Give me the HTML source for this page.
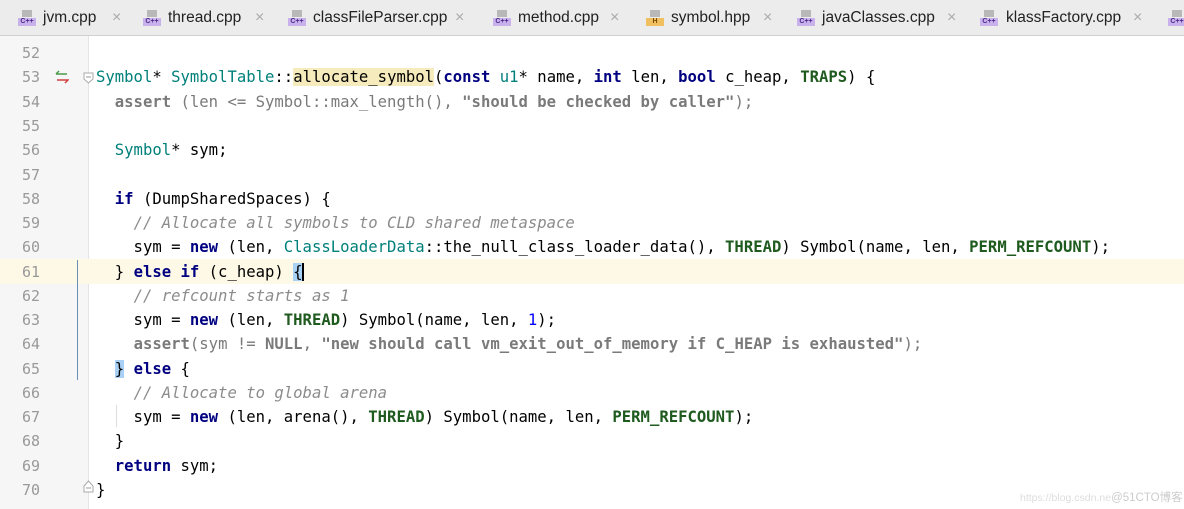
<!DOCTYPE html>
<html><head><meta charset="utf-8"><style>
body{margin:0;width:1184px;height:509px;overflow:hidden;background:#fff;position:relative;font-family:"Liberation Sans",sans-serif}
.tabs{position:absolute;left:0;top:0;width:1184px;height:35px;background:#ececec;border-bottom:1px solid #d0d0d0}
.tab{position:absolute;top:0;height:35px;line-height:35px;font-size:15.5px;color:#222;white-space:nowrap}
.ic{position:absolute;top:10px;width:18px;height:16px}
.ic .f{position:absolute;left:4px;top:0;width:10px;height:7px;background:#b8b8b8}
.ic .l{position:absolute;left:0;bottom:0;width:18px;height:8px;background:#c9b1ec;color:#4b2a8a;font-size:7px;line-height:8px;text-align:center;font-weight:bold}
.x{position:absolute;top:0;color:#aaa;font-size:16px}
.gut{position:absolute;left:0;top:36px;width:88px;height:473px;background:#f6f6f6;border-right:1px solid #e4e4e4}
.row{position:absolute;left:0;width:1184px;height:24px;line-height:24px;font-family:"DejaVu Sans Mono","Liberation Mono",monospace;font-size:15.6px;white-space:pre;color:#000}
.n{position:absolute;left:22px;color:#999;font-size:15px}
.c{position:absolute;left:96px}
.k{color:#000080;font-weight:bold}
.t{color:#00807a}
.g{color:#1f5a1f;font-weight:bold}
.d{color:#7a7a7a}
.cm{color:#8c8c8c;font-style:italic}
.num{color:#0000ff}
.hl{background:#f6ebbc}
</style></head><body>
<div class="tabs">
<div class="tab" style="left:18px"><div class="ic"><div class="f"></div><div class="l">C++</div></div><span style="position:absolute;left:25px">jvm.cpp</span><span class="x" style="left:94px">×</span></div>
<div class="tab" style="left:143px"><div class="ic"><div class="f"></div><div class="l">C++</div></div><span style="position:absolute;left:25px">thread.cpp</span><span class="x" style="left:112px">×</span></div>
<div class="tab" style="left:288px"><div class="ic"><div class="f"></div><div class="l">C++</div></div><span style="position:absolute;left:25px">classFileParser.cpp</span><span class="x" style="left:167px">×</span></div>
<div class="tab" style="left:493px"><div class="ic"><div class="f"></div><div class="l">C++</div></div><span style="position:absolute;left:25px">method.cpp</span><span class="x" style="left:117px">×</span></div>
<div class="tab" style="left:646px"><div class="ic"><div class="f"></div><div class="l" style="background:#f0c060;color:#7a4a00">H</div></div><span style="position:absolute;left:25px">symbol.hpp</span><span class="x" style="left:117px">×</span></div>
<div class="tab" style="left:797px"><div class="ic"><div class="f"></div><div class="l">C++</div></div><span style="position:absolute;left:25px">javaClasses.cpp</span><span class="x" style="left:150px">×</span></div>
<div class="tab" style="left:980px"><div class="ic"><div class="f"></div><div class="l">C++</div></div><span style="position:absolute;left:26px">klassFactory.cpp</span><span class="x" style="left:153px">×</span></div>
<div class="tab" style="left:1168px"><div class="ic"><div class="f"></div><div class="l">C++</div></div></div>
</div>
<div class="gut"></div>
<div style="position:absolute;left:0;top:259px;width:1184px;height:25px;background:#fdf9e6"></div>
<div style="position:absolute;left:77px;top:260px;width:1px;height:120px;background:#6a8fb5"></div>
<div style="position:absolute;left:116px;top:405px;width:1px;height:22px;background:#ddd"></div>
<svg style="position:absolute;left:55px;top:70px" width="14" height="14"><path d="M1 4h11M1 4l3-3" stroke="#4a9a4a" stroke-width="1.5" fill="none"/><path d="M2 10h11l-3 3" stroke="#d04040" stroke-width="1.5" fill="none"/></svg>
<svg style="position:absolute;left:83px;top:72px" width="11" height="12"><path d="M1 1h9v6l-4.5 4L1 7z" fill="#fff" stroke="#aaa"/><path d="M3 5h5" stroke="#999"/></svg>
<svg style="position:absolute;left:83px;top:480px" width="11" height="13"><path d="M1 12h9V6L5.5 1 1 6z" fill="#fff" stroke="#aaa"/><path d="M3 8h5" stroke="#999"/></svg>

<div class="row" style="top:41px"><span class="n">52</span></div>
<div class="row" style="top:65px"><span class="n">53</span><span class="c"><span class="t">Symbol</span>* <span class="t">SymbolTable</span>::<span class="hl">allocate_symbol</span>(<span class="k">const</span> <span class="t">u1</span>* name, <span class="k">int</span> len, <span class="k">bool</span> c_heap, <span class="g">TRAPS</span>) {</span></div>
<div class="row" style="top:90px"><span class="n">54</span><span class="c d">  <b>assert</b> (len &lt;= Symbol::max_length(), <b>"should be checked by caller"</b>);</span></div>
<div class="row" style="top:114px"><span class="n">55</span></div>
<div class="row" style="top:138px"><span class="n">56</span><span class="c">  <span class="t">Symbol</span>* sym;</span></div>
<div class="row" style="top:163px"><span class="n">57</span></div>
<div class="row" style="top:187px"><span class="n">58</span><span class="c">  <span class="k">if</span> (DumpSharedSpaces) {</span></div>
<div class="row" style="top:211px"><span class="n">59</span><span class="c">    <span class="cm">// Allocate all symbols to CLD shared metaspace</span></span></div>
<div class="row" style="top:235px"><span class="n">60</span><span class="c">    sym = <span class="k">new</span> (len, <span class="t">ClassLoaderData</span>::the_null_class_loader_data(), <span class="g">THREAD</span>) Symbol(name, len, <span class="g">PERM_REFCOUNT</span>);</span></div>
<div class="row" style="top:260px"><span class="n">61</span><span class="c">  } <span class="k">else if</span> (c_heap) <span style="background:#a8d1f5">{</span><span style="border-left:2px solid #000;margin-left:-1px"></span></span></div>
<div class="row" style="top:284px"><span class="n">62</span><span class="c">    <span class="cm">// refcount starts as 1</span></span></div>
<div class="row" style="top:308px"><span class="n">63</span><span class="c">    sym = <span class="k">new</span> (len, <span class="g">THREAD</span>) Symbol(name, len, <span class="num">1</span>);</span></div>
<div class="row" style="top:332px"><span class="n">64</span><span class="c d">    <b>assert</b>(sym != <b>NULL</b>, <b>"new should call vm_exit_out_of_memory if C_HEAP is exhausted"</b>);</span></div>
<div class="row" style="top:357px"><span class="n">65</span><span class="c">  <span style="background:#a8d1f5">}</span> <span class="k">else</span> {</span></div>
<div class="row" style="top:381px"><span class="n">66</span><span class="c">    <span class="cm">// Allocate to global arena</span></span></div>
<div class="row" style="top:405px"><span class="n">67</span><span class="c">    sym = <span class="k">new</span> (len, arena(), <span class="g">THREAD</span>) Symbol(name, len, <span class="g">PERM_REFCOUNT</span>);</span></div>
<div class="row" style="top:429px"><span class="n">68</span><span class="c">  }</span></div>
<div class="row" style="top:454px"><span class="n">69</span><span class="c">  <span class="k">return</span> sym;</span></div>
<div class="row" style="top:478px"><span class="n">70</span><span class="c">}</span></div>
<div style="position:absolute;left:1020px;top:489px;white-space:nowrap;font-size:10.5px;color:#ddd;font-family:'Liberation Sans','Noto Sans CJK SC',sans-serif">https://blog.csdn.ne<span style="color:#ccc;font-size:11.5px">@51CTO博客</span></div>
</body></html>
